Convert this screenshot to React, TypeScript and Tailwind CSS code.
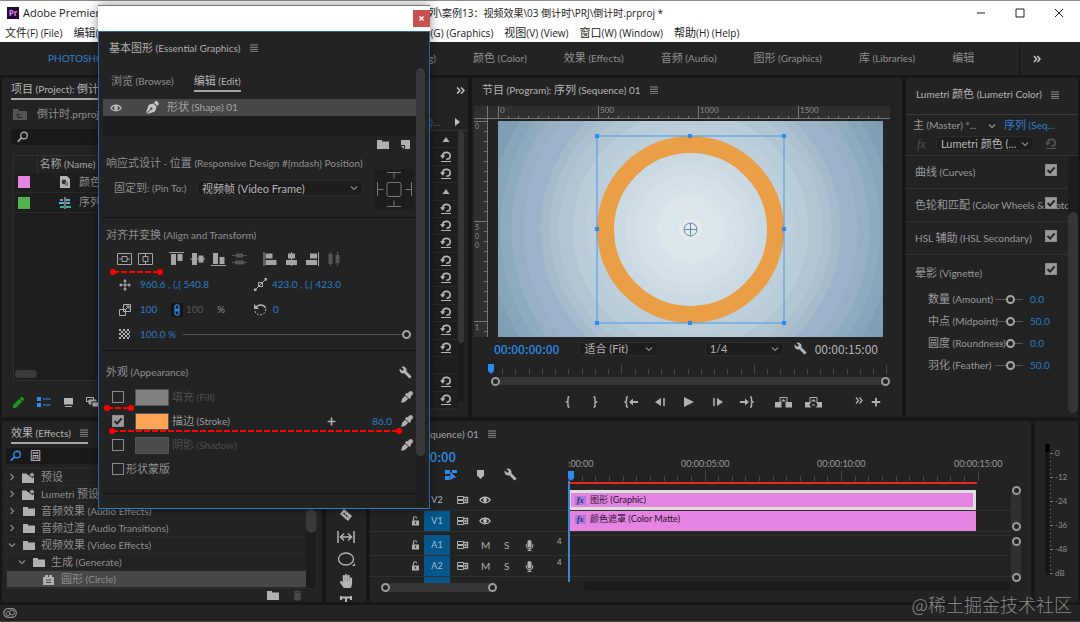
import { useState } from 'react';
import type { ReactNode } from 'react';
import { FaEyeDropper, FaFolder, FaHandPaper, FaMicrophone, FaPen, FaPenNib, FaPlus } from 'react-icons/fa';
import { MdBuild, MdDelete } from 'react-icons/md';

/* Bilingual label: hanzi are set one size above the latin text */
function T({ s, className = '' }: { s: string; className?: string }) {
  return (
    <span className={`whitespace-pre ${className}`}>
      {s.split(/([\u3000-\u9fff]+)/).map((part, i) => (i % 2 ? <span key={i} className="text-[11px]">{part}</span> : part))}
    </span>
  );
}

/* ---------- small icons ---------- */

function Svg({ w, h, className = '', children }: { w: number; h: number; className?: string; children: ReactNode }) {
  return (
    <svg width={w} height={h} viewBox={`0 0 ${w} ${h}`} className={`shrink-0 ${className}`} fill="none" stroke="currentColor">
      {children}
    </svg>
  );
}

const MenuIcon = () => (
  <Svg w={8} h={8} className="text-[#9a9a9a]"><path d="M0 1h8M0 3.3h8M0 5.6h8M0 7.8h8" strokeWidth="0.9" /></Svg>
);

const Chevron = ({ down = true, className = '' }: { down?: boolean; className?: string }) => (
  <Svg w={8} h={8} className={className}><path d={down ? 'M1 2.5 4 5.5 7 2.5' : 'M2.5 1 5.5 4 2.5 7'} strokeWidth="1.1" /></Svg>
);

const SearchIcon = ({ className }: { className: string }) => (
  <Svg w={12} h={12} className={className}><circle cx="7" cy="4.5" r="3.3" strokeWidth="1.4" /><path d="M4.6 6.8.8 10.6" strokeWidth="1.8" /></Svg>
);

const EyeIcon = () => (
  <Svg w={12} h={8} className="text-[#c0c0c0]"><path d="M.8 4C3.4.3 8.6.3 11.2 4 8.6 7.7 3.4 7.7.8 4Z" strokeWidth="1.3" /><circle cx="6" cy="4" r="1.9" fill="currentColor" stroke="none" /></Svg>
);

const ResetIcon = ({ className = 'text-[#b5b5b5]' }: { className?: string }) => (
  <Svg w={12} h={12} className={className}>
    <path d="M2.5 5C2.8.2 10.2.2 10.2 4.7 10.2 7 8.9 8.2 6.4 8.2" strokeWidth="1.7" />
    <path d="M0 4.2h5.4L2.6 7.8Z" fill="currentColor" stroke="none" />
    <path d="M1 10.5h10" />
  </Svg>
);

const PresetFolder = () => (
  <Svg w={13} h={11}>
    <path d="M0 1.5h4.5L5.5 3H7l.6 1.8 2 .2.2 1.5L12 5v6H0Z" fill="currentColor" stroke="none" />
    <path d="m10 0 .8 1.7 1.8.2-1.3 1.3.4 1.8L10 4.1l-1.7.9.4-1.8L7.4 1.9l1.8-.2Z" fill="currentColor" stroke="none" />
  </Svg>
);

const FolderIcon = () => (
  <Svg w={12} h={9}><path d="M0 0h5v1.500h7V9H0Z" fill="currentColor" stroke="none" /></Svg>
);

const SourceIcon = () => (
  <Svg w={12} h={10}>
    <path d="M.5 1.5h6v3h-6ZM.5 5.5h6v3h-6Z" />
    <path d="M6.5 2.5h4v5h-4" strokeWidth="1.4" />
    <path d="M7.500 4h2v2h-2Z" fill="currentColor" stroke="none" />
  </Svg>
);

const LockIcon = () => (
  <Svg w={9} h={10}><path d="M1 4.5h7V9.5H1Z" fill="currentColor" stroke="none" /><path d="M2.4 4.5V2.4a1.6 1.6 0 0 1 3.2 0" strokeWidth="1.1" /><path d="M4.5 5.8v2" stroke="#232323" strokeWidth="1.2" /></Svg>
);

const Playhead = () => (
  <Svg w={6} h={10}><path d="M0 0h6v7L3 10 0 7Z" fill="#2d8ceb" stroke="none" /></Svg>
);

const Knob = () => <span className="h-[9px] w-[9px] shrink-0 rounded-full border-2 border-[#9b9b9b] bg-[#232323]" />;

/* ---------- controls ---------- */

function Check({ label, checked }: { label: string; checked?: boolean }) {
  const [on, setOn] = useState(!!checked);
  return (
    <span className="relative inline-flex h-[12px] w-[12px] shrink-0">
      <input
        type="checkbox"
        aria-label={label}
        checked={on}
        onChange={(e) => setOn(e.target.checked)}
        className="h-full w-full appearance-none border border-[#8a8a8a] checked:bg-[#9a9a9a]"
      />
      {on && (
        <svg viewBox="0 0 12 12" className="pointer-events-none absolute inset-0" fill="none" stroke="#222" strokeWidth="2">
          <path d="m2.5 6 2.6 2.6L9.6 3.4" />
        </svg>
      )}
    </span>
  );
}

function Select({ label, value, className = '' }: { label: string; value: string; className?: string }) {
  return (
    <span className={`relative flex items-center rounded-sm border border-[#2b2b2b] bg-[#1d1d1d] text-[11px] text-[#b5b5b5] ${className}`}>
      <select aria-label={label} className="w-full appearance-none bg-transparent pr-4 pl-1 leading-none outline-none">
        <option>{value}</option>
      </select>
      <Chevron className="pointer-events-none absolute right-1 text-[#8a8a8a]" />
    </span>
  );
}

function Slider({ label, value, className = '' }: { label: string; value: number; className?: string }) {
  return (
    <input
      type="range"
      aria-label={label}
      defaultValue={value}
      className={`h-[10px] appearance-none bg-[linear-gradient(#555,#555)] bg-[length:100%_1px] bg-center bg-no-repeat [&::-webkit-slider-thumb]:h-[9px] [&::-webkit-slider-thumb]:w-[9px] [&::-webkit-slider-thumb]:appearance-none [&::-webkit-slider-thumb]:rounded-full [&::-webkit-slider-thumb]:border-2 [&::-webkit-slider-thumb]:border-[#a5a5a5] [&::-webkit-slider-thumb]:bg-[#232323] ${className}`}
    />
  );
}

const Panel = ({ className = '', children }: { className?: string; children: ReactNode }) => (
  <section className={`flex flex-col overflow-hidden bg-[#232323] ${className}`}>{children}</section>
);

/* ---------- application frame ---------- */

const MENUS = ['文件(F) (File)', '编辑(E) (Edit)', '剪辑(C) (Clip)', '序列(S) (Sequence)', '标记(M) (Markers)', '图形(G) (Graphics)', '视图(V) (View)', '窗口(W) (Window)', '帮助(H) (Help)'];
const WORKSPACES = ['颜色 (Color)', '效果 (Effects)', '音频 (Audio)', '图形 (Graphics)', '库 (Libraries)', '编辑'];

function TitleBar() {
  return (
    <header className="border-t border-[#8a8a8a] bg-white font-['Open_Sans','Noto_Sans_CJK_SC',sans-serif] text-[#222]">
      <div className="flex h-6 items-center pl-[7px]">
        <span className="flex h-[12px] w-[12px] items-center justify-center bg-[#2a0634] text-[8px] font-bold text-[#d58cf0]">Pr</span>
        <span className="ml-1 flex w-[419px] shrink-0 justify-between text-[11px]">
          <span>Adobe Premiere Pro 2020</span>
          <span>E:\PR\系列\</span>
        </span>
        <span className="whitespace-nowrap">案例13：视频效果\03 倒计时\PRJ\倒计时.prproj *</span>
        <div className="ml-auto flex items-center gap-[29px] pr-4">
          <button aria-label="Minimize"><Svg w={10} h={10}><path d="M1 5h8" /></Svg></button>
          <button aria-label="Maximize"><Svg w={10} h={10}><path d="M1 1h8v8H1Z" /></Svg></button>
          <button aria-label="Close"><Svg w={10} h={10}><path d="m1 1 8 8M9 1 1 9" /></Svg></button>
        </div>
      </div>
      <nav className="flex h-[17px] items-center gap-[11px] pl-[5px]">
        {MENUS.map((m) => <button key={m}><T s={m} /></button>)}
      </nav>
    </header>
  );
}

function WorkspaceBar() {
  return (
    <nav className="mb-[3px] flex h-[33px] items-center bg-[#232323] pl-12 text-[#8f8f8f]">
      <div className="flex w-[388px] shrink-0 items-center justify-between">
        <button className="text-[#2d7fd0]">PHOTOSHOP</button>
        <button><T s="学习 (Learning)" /></button>
        <button><T s="编辑 (Editing)" /></button>
      </div>
      <div className="ml-[37px] flex gap-[37px]">
        {WORKSPACES.map((w) => <button key={w}><T s={w} /></button>)}
      </div>
      <div className="ml-auto flex h-full w-[61px] items-center border-l border-[#151515] pl-[13px]">
        <button aria-label="More workspaces" className="text-[#c5c5c5]">
          <Svg w={8} h={8}><path d="m1 1 2.6 3L1 7M4.4 1 7 4 4.4 7" strokeWidth="1.5" /></Svg>
        </button>
      </div>
    </nav>
  );
}

function ProjectPanel() {
  return (
    <Panel className="w-80 shrink-0 pr-2 pl-[9px]">
      <div className="flex h-[22px] items-center border-b-2 border-[#a8a8a8] pt-[2px] text-[#b5b5b5]"><T s="项目 (Project): 倒计时" /></div>
      <div className="flex h-[29px] items-center gap-[10px] pl-[2px] text-[#8f8f8f]">
        <Svg w={14} h={11} className="text-[#555]"><path d="M0 0h5l1 2h8v9H0Z" fill="currentColor" stroke="none" /><path d="M5 5.5v3h4M3.2 6.5 5 4.5l1.8 2" stroke="#222" /></Svg>
        <T s="倒计时.prproj" />
      </div>
      <label className="flex h-4 items-center gap-2 rounded-sm bg-[#191919] pl-[6px]">
        <SearchIcon className="text-[#a5a5a5]" />
        <input aria-label="Search project" className="w-full bg-transparent outline-none" />
      </label>
      <div className="mt-[10px] ml-[2px] flex h-[226px] flex-col border border-[#303030] bg-[#1e1e1e] text-[#8f8f8f]">
        <table className="w-full border-collapse">
          <thead>
            <tr className="h-4 bg-[#232323] text-left text-[#a8a8a8]"><th className="w-[23px] border-r border-[#303030] p-0" /><th className="p-0 pl-[2px] font-normal"><T s="名称 (Name)" /></th></tr>
          </thead>
          <tbody>
            <tr className="h-[20px] border-b border-[#2a2a2a]">
              <td className="p-0 pl-[4px]"><div className="h-3 w-3 bg-[#e583e2]" /></td>
              <td className="p-0"><div className="flex items-center gap-2 pl-[22px]">
                <Svg w={12} h={12} className="text-[#b5b5b5]"><path d="M1 0h7l3 3v9H1Z" fill="currentColor" stroke="none" /><circle cx="5" cy="6" r="2.4" fill="#333" stroke="none" /><path d="M6 6h3v4H6Z" fill="#777" stroke="none" /></Svg>
                <T s="颜色遮罩" />
              </div></td>
            </tr>
            <tr className="h-[20px] border-b border-[#2a2a2a]">
              <td className="p-0 pl-[4px]"><div className="h-3 w-3 bg-[#53b353]" /></td>
              <td className="p-0"><div className="flex items-center gap-2 pl-[22px]">
                <Svg w={12} h={12}><path d="M1 3h3M7 3h4M0 6h5M7 6h4" stroke="#6da4cf" strokeWidth="2" /><path d="M1 10h4M7 10h5" stroke="#29b58f" strokeWidth="2" /><path d="M6 0v12" stroke="#ccc" /></Svg>
                <T s="序列 (Sequence) 01" />
              </div></td>
            </tr>
          </tbody>
        </table>
        <div className="mt-auto mb-[2px] ml-[1px] h-2 w-[22px] rounded-full bg-[#3a3a3a]" />
      </div>
      <div className="flex flex-1 items-center gap-[13px] pt-[6px] pl-[2px] text-[#b5b5b5]">
        <FaPen size={11} className="text-[#1f9a1f]" />
        <Svg w={14} h={10} className="text-[#2d8ceb]"><path d="M0 0h4v4H0ZM0 6h4v4H0Z" fill="currentColor" stroke="none" /><path d="M6 2h8M6 8h8" /></Svg>
        <Svg w={9} h={9}><path d="M0 0h9v6.5H0ZM1 8h7v1H1Z" fill="currentColor" stroke="none" /></Svg>
        <Svg w={13} h={10}><path d="M.5.5h7v4h-7Z" /><path d="M3 3h7v4H3Z" fill="#999" /><path d="M6 5h7v5H6Z" fill="currentColor" stroke="#232323" /></Svg>
      </div>
    </Panel>
  );
}

/* 't' is a section toggle, 'r' a parameter reset, '-' an empty line */
const CONTROL_ROWS = 'trrtrrrrrrrrr-rr'.split('');

function EffectControls() {
  return (
    <Panel className="w-[142px] shrink-0">
      <div className="flex h-9 items-center justify-end pr-[3px] pb-3 text-[#c5c5c5]">
        <Svg w={9} h={7}><path d="m1 .5 3 3-3 3M5 .5l3 3-3 3" strokeWidth="1.4" /></Svg>
      </div>
      <div className="flex h-[17px] items-center justify-end gap-[15px] border-b border-[#333] pr-[8px]">
        <T s="序列 01 (Graphic)..." className="text-[#2b6fb0]" />
        <Svg w={5} h={8} className="text-[#c5c5c5]"><path d="M0 0v8l5-4Z" fill="currentColor" stroke="none" /></Svg>
      </div>
      <div className="flex min-h-0 flex-1">
        <div className="mb-2 flex flex-1 flex-col bg-[#1e1e1e]">
          {CONTROL_ROWS.map((kind, i) => (
            <div key={i} className="flex min-h-0 flex-1 items-center justify-end border-b border-[#292929] pr-[6px]">
              {kind === 'r' && <ResetIcon />}
              {kind === 't' && <Svg w={12} h={5} className="text-[#b0b0b0]"><path d="M6 0 9.5 5h-7Z" fill="currentColor" stroke="none" /></Svg>}
            </div>
          ))}
        </div>
        <div className="mr-1 mb-4 w-[6px] bg-[#1b1b1b]"><div className="h-[212px] rounded-full bg-[#353535]" /></div>
      </div>
    </Panel>
  );
}

/* ---------- program monitor ---------- */

const RINGS: [number, string][] = [
  [215, '#809fb5'], [202, '#88a6b9'], [190, '#8fabbe'], [179, '#97b0c4'], [167, '#9cb4c9'], [150, '#a5bbcb'], [141, '#abc1d1'],
  [132, '#b0c6d3'], [118, '#b8ccd9'], [104, '#bccfdb'], [88, '#c4d4df'], [78, '#cbd9e2'], [65, '#cfdce5'], [55, '#d3e0e7'], [45, '#d6e2e9'], [34, '#dbe6eb'], [11, '#e8e9eb'],
];

function Stage() {
  const handles = [[99, 15], [192, 15], [286, 15], [99, 108], [286, 108], [99, 202], [192, 202], [286, 202]];
  return (
    <svg viewBox="0 0 385 216" className="block h-auto w-full">
      <rect width="385" height="216" fill="#7b9db2" />
      {RINGS.map(([r, c]) => <circle key={r} cx="192.5" cy="108.5" r={r} fill={c} />)}
      <circle cx="192.5" cy="108.5" r="85" fill="none" stroke="#ea9e46" strokeWidth="17" />
      <rect x="99" y="15" width="187" height="187" fill="none" stroke="#4a96e6" />
      {handles.map(([x, y]) => <rect key={`${x}-${y}`} x={x - 2} y={y - 2} width="4" height="4" fill="#2d8ceb" />)}
      <g fill="none" stroke="#5f8fb4"><circle cx="192.5" cy="108.5" r="6.5" /><path d="M186 108.5h13M192.5 102v13" /></g>
    </svg>
  );
}

function ProgramMonitor() {
  const steps = Array.from({ length: 39 }, (_, i) => i);
  return (
    <Panel className="flex-1 pl-[2px]">
      <div className="mb-1 flex h-6 items-center gap-[9px] pl-2 text-[#b5b5b5]"><T s="节目 (Program): 序列 (Sequence) 01" /><MenuIcon /></div>
      <svg className="block h-[13px] w-[416px] bg-[#2f2f2f]" stroke="#777" fill="none">
        <path d="M0 12.5h416M13.5 0v13" />
        {steps.map((i) => <path key={i} d={`M${24.5 + i * 10} ${i % 10 === 0 ? 0 : 10}v13`} />)}
        {['0', '500', '1000', '1500'].map((n, i) => <text key={n} x={26 + i * 100} y="7" fill="#8d8d8d" stroke="none" fontSize="8">{n}</text>)}
      </svg>
      <div className="flex">
        <svg className="block h-[218px] w-[14px] bg-[#2f2f2f]" stroke="#777" fill="none">
          <path d="M13.5 0v218M0 2.5h13M0 102.5h13M0 202.5h13" />
          {steps.slice(0, 22).map((i) => <path key={i} d={`M10 ${2.5 + i * 10}h4`} />)}
          <g fill="#8d8d8d" stroke="none" fontSize="7">
            <text x="1" y="10">0</text><text x="1" y="111">5</text><text x="1" y="120">0</text><text x="1" y="129">0</text><text x="1" y="211">1</text>
          </g>
        </svg>
        <div className="mr-[19px] ml-[10px] flex-1 pt-[2px]"><Stage /></div>
      </div>
      <div className="flex h-[23px] items-center justify-between pr-6 pl-5">
        <div className="flex items-center gap-5">
          <span className="font-['Noto_Sans_CJK_SC',sans-serif] text-xs font-medium text-[#2d8ceb]">00:00:00:00</span>
          <Select label="Zoom level" value="适合 (Fit)" className="h-[14px] w-[79px]" />
        </div>
        <div className="flex items-center text-[#b5b5b5]">
          <Select label="Playback resolution" value="1/4" className="h-[14px] w-[79px]" />
          <button aria-label="Settings" className="mr-2 ml-[10px]"><MdBuild size={13} /></button>
          <span className="font-['Noto_Sans_CJK_SC',sans-serif] text-xs">00:00:15:00</span>
        </div>
      </div>
      <div className="flex h-[14px] items-end pl-[14px]">
        <Playhead />
        <svg className="block h-[10px] flex-1" stroke="#484848" fill="none">
          {steps.slice(0, 30).map((i) => <path key={i} d={`M${8.5 + Math.round(i * 13.25)} ${i % 10 === 9 ? 1 : 5}v10`} />)}
        </svg>
      </div>
      <div className="mr-3 ml-[17px] flex h-[14px] items-center">
        <div className="flex h-2 flex-1 items-center justify-between rounded-full bg-[#353535]"><Knob /><Knob /></div>
      </div>
      <div className="grid flex-1 grid-cols-[1fr_auto_1fr] items-center pb-[2px] pl-[6px] text-[#b0b0b0]">
        <span />
        <div className="flex gap-5">
          <div className="flex gap-[11px]">
            <button aria-label="Mark in"><Svg w={16} h={12}><path d="M9.5 1h-1L8 2v3L6.5 6 8 7v3l.5 1h1" strokeWidth="1.5" /></Svg></button>
            <button aria-label="Mark out"><Svg w={16} h={12}><path d="M6.5 1h1L8 2v3l1.5 1L8 7v3l-.5 1h-1" strokeWidth="1.5" /></Svg></button>
          </div>
          <div className="flex gap-[13px]">
            <button aria-label="Go to in"><Svg w={16} h={12}><path d="M5 1H4l-.5 1v3L2 6l1.5 1v3l.5 1h1" strokeWidth="1.5" /><path d="M9 6h6" strokeWidth="2" /><path d="m6 6 4-3.5v7Z" fill="currentColor" stroke="none" /></Svg></button>
            <button aria-label="Step back"><Svg w={16} h={12}><path d="M9 2v8L3 6Z" fill="currentColor" stroke="none" /><path d="M12 2v8" strokeWidth="1.6" /></Svg></button>
            <button aria-label="Play"><Svg w={16} h={12}><path d="M3 1v10l10-5Z" fill="currentColor" stroke="none" /></Svg></button>
            <button aria-label="Step forward"><Svg w={16} h={12}><path d="M7 2v8l6-4Z" fill="currentColor" stroke="none" /><path d="M4 2v8" strokeWidth="1.6" /></Svg></button>
            <button aria-label="Go to out"><Svg w={16} h={12}><path d="M11 1h1l.5 1v3L14 6l-1.5 1v3l-.5 1h-1" strokeWidth="1.5" /><path d="M1 6h6" strokeWidth="2" /><path d="M10 6 6 2.5v7Z" fill="currentColor" stroke="none" /></Svg></button>
          </div>
          <div className="flex gap-[13px]">
            <button aria-label="Lift"><Svg w={17} h={12}><path d="M0 6h6.500v5.500H0ZM10.500 6H17v5.500h-6.500Z" fill="currentColor" stroke="none" /><path d="M5 6V1.500h7V6" /><path d="M8.500 3 11 5.500H6Z" fill="currentColor" stroke="none" /></Svg></button>
            <button aria-label="Extract"><Svg w={17} h={12}><path d="M0 6h6L4.500 8.800 6 11.500H0ZM17 6h-6l1.500 2.800-1.500 2.700h6Z" fill="currentColor" stroke="none" /><path d="M5 6V1.500h7V6M7 9h3" /><path d="M8.500 3 11 5.500H6Z" fill="currentColor" stroke="none" /></Svg></button>
          </div>
        </div>
        <div className="flex justify-end gap-2 pr-[21px]">
          <button aria-label="More buttons" className="self-start"><Svg w={8} h={7}><path d="m1 .5 2.5 3L1 6.5M4.5.5 7 3.5l-2.5 3" strokeWidth="1.3" /></Svg></button>
          <button aria-label="Button editor"><FaPlus size={10} /></button>
        </div>
      </div>
    </Panel>
  );
}

/* ---------- lumetri ---------- */

const LUMETRI = ['曲线 (Curves)', '色轮和匹配 (Color Wheels & Match)', 'HSL 辅助 (HSL Secondary)', '晕影 (Vignette)'];
const VIGNETTE: [string, string][] = [['数量 (Amount)', '0.0'], ['中点 (Midpoint)', '50.0'], ['圆度 (Roundness)', '0.0'], ['羽化 (Feather)', '50.0']];

function LumetriPanel() {
  return (
    <Panel className="w-[172px] shrink-0 text-[#9a9a9a]">
      <div className="flex h-[37px] items-center gap-[9px] border-b border-[#3a3a3a] pb-[3px] pl-[10px] text-[#b5b5b5]">
        <T s="Lumetri 颜色 (Lumetri Color)" /><MenuIcon />
      </div>
      <div className="flex h-[21px] items-center pl-[7px]">
        <T s="主 (Master) *..." className="w-[75px]" /><Chevron /><a href="#seq" className="ml-2 text-[#2d7fd0]"><T s="序列 (Seq..." /></a>
      </div>
      <div className="flex h-5 items-center border-b border-[#333] pb-1 pl-[11px]">
        <span className="w-[19px] font-['Liberation_Serif',serif] text-xs text-[#555] italic">fx</span>
        <Select label="Effect" value="Lumetri 颜色 (..." className="h-[15px] w-[98px]" />
        <ResetIcon className="ml-[11px] text-[#555]" />
      </div>
      <div className="flex min-h-0 flex-1">
        <div className="min-w-0 flex-1">
          {LUMETRI.map((name, i) => (
            <div key={name} className={`relative flex h-[33px] items-center overflow-hidden pl-[9px] ${i < 3 ? 'border-b border-[#303030]' : 'pt-1'}`}>
              <T s={name} />
              <span className="absolute top-[8px] right-[11px] flex bg-[#232323]"><Check label={name} checked /></span>
            </div>
          ))}
          {VIGNETTE.map(([name, value]) => (
            <label key={name} className="flex h-[22px] items-center pl-[22px]">
              <span className="w-0 flex-1"><T s={name} /></span>
              <Slider label={name} value={60} className="w-[28px]" />
              <span className="ml-[7px] w-[38px] text-[#2b7bc4]">{value}</span>
            </label>
          ))}
        </div>
        <div className="mb-1 w-[10px] bg-[#1d1d1d] pt-14"><div className="h-full rounded-full bg-[#353535]" /></div>
      </div>
    </Panel>
  );
}

/* ---------- lower row ---------- */

const TREE: { name: string; icon: 'preset' | 'folder' | 'effect'; open?: boolean; depth: number }[] = [
  { name: '预设', icon: 'preset', depth: 0 },
  { name: 'Lumetri 预设', icon: 'preset', depth: 0 },
  { name: '音频效果 (Audio Effects)', icon: 'folder', depth: 0 },
  { name: '音频过渡 (Audio Transitions)', icon: 'folder', depth: 0 },
  { name: '视频效果 (Video Effects)', icon: 'folder', open: true, depth: 0 },
  { name: '生成 (Generate)', icon: 'folder', open: true, depth: 1 },
  { name: '圆形 (Circle)', icon: 'effect', depth: 2 },
];
const INDENT = ['pl-[1px]', 'pl-[11px]', 'pl-[35px]'];

function EffectsPanel() {
  return (
    <Panel className="w-80 shrink-0 pl-1">
      <div className="ml-[5px] flex h-[23px] w-[77px] shrink-0 items-center gap-[9px] self-start border-b-2 border-[#a8a8a8] pt-[3px] text-[#b5b5b5]">
        <T s="效果 (Effects)" /><MenuIcon />
      </div>
      <label className="mt-1 mr-4 flex h-4 shrink-0 items-center gap-2 bg-[#191919] pl-1">
        <SearchIcon className="text-[#2d8ceb]" />
        <input aria-label="Search effects" defaultValue="圆" className="w-full bg-transparent text-[11px] text-[#c5c5c5] outline-none" />
      </label>
      <div className="mt-1 mr-[5px] flex border border-[#2c2c2c] text-[#8f8f8f]">
        <ul className="flex-1">
          {TREE.map((n) => (
            <li key={n.name} className={`flex h-[17px] items-center gap-[6px] border-b border-[#292929] ${INDENT[n.depth]} ${n.depth === 2 ? 'bg-[#474747]' : ''}`}>
              {n.depth < 2 && <Chevron down={n.open ?? false} />}
              <span className="flex w-[13px] shrink-0 justify-center text-[#b0b0b0]">
                {n.icon === 'preset' && <PresetFolder />}
                {n.icon === 'folder' && <FolderIcon />}
                {n.icon === 'effect' && <Svg w={11} h={11}><path d="M0 3h2V1h3v2h1V1h3v2h2v8H0Z" fill="currentColor" stroke="none" /><path d="M3 6h5M3 8.5h5" stroke="#444" /></Svg>}
              </span>
              <T s={n.name} />
            </li>
          ))}
        </ul>
        <div className="w-[10px] bg-[#1d1d1d] pt-10"><div className="h-6 rounded-full bg-[#3a3a3a]" /></div>
      </div>
      <div className="flex min-h-0 flex-1 items-center justify-end gap-3 pr-[18px] text-[#b0b0b0]">
        <button aria-label="New bin"><FolderIcon /></button>
        <button aria-label="Delete" className="text-[#484848]"><MdDelete size={13} /></button>
      </div>
    </Panel>
  );
}

function ToolsPanel() {
  return (
    <Panel className="w-10 shrink-0 items-center gap-2 pt-[87px] text-[#b5b5b5] *:shrink-0">
      <button aria-label="Razor"><Svg w={14} h={14}><path d="m5 1 8 7-4 5-8-7Z" fill="currentColor" stroke="none" /><path d="m4.5 5 5 4.5" stroke="#232323" strokeWidth="1.5" strokeDasharray="2 1" /></Svg></button>
      <button aria-label="Slip"><Svg w={18} h={14}><path d="M1 1v12M17 1v12M4 7h10" strokeWidth="1.5" /><path d="M7 3.5 3.500 7 7 10.500M11 3.500 14.500 7 11 10.500" strokeWidth="1.500" /></Svg></button>
      <button aria-label="Ellipse"><Svg w={18} h={14}><ellipse cx="9" cy="7" rx="7.5" ry="6" strokeWidth="1.3" /><path d="M18 11v3h-3Z" fill="currentColor" stroke="none" /></Svg></button>
      <button aria-label="Hand"><FaHandPaper size={14} /></button>
      <button aria-label="Type"><Svg w={12} h={12}><path d="M0 1.5h12M1 0v4M11 0v4M6 1v11" strokeWidth="2" /></Svg></button>
    </Panel>
  );
}

function TrackHead({ name, audio, locked = true }: { name: string; audio?: boolean; locked?: boolean }) {
  return (
    <div className="flex h-[21px] items-center border-b border-[#303030] pl-[41px] text-[#b0b0b0]">
      <span className="w-[13px] shrink-0">{locked && <LockIcon />}</span>
      <span className={`flex h-full w-[26px] shrink-0 items-center justify-center text-[9px] text-[#9fbfd8] ${locked ? 'bg-[#07568c]' : ''}`}>{name}</span>
      <span className="ml-[7px] flex w-[22px]"><SourceIcon /></span>
      {audio ? (
        <>
          <button className="w-[23px] pl-[2px] text-left">M</button>
          <button className="w-[22px] pl-[2px] text-left">S</button>
          <FaMicrophone size={11} />
          <span className="ml-[22px] self-start text-[8px]">4</span>
        </>
      ) : <EyeIcon />}
    </div>
  );
}

const Fx = () => <i className="mx-1 w-[11px] bg-[#a77fd6] px-[2px] font-['Liberation_Serif',serif] text-[8px] leading-[9px] font-bold text-[#33208a]">fx</i>;

function Timeline() {
  const ticks = Array.from({ length: 31 }, (_, i) => i);
  return (
    <Panel className="flex-1">
      <div className="flex h-[26px] shrink-0 items-center gap-[9px] pl-[22px] text-[#a5a5a5]"><T s="序列 (Sequence) 01" /><MenuIcon /></div>
      <div className="flex min-h-0 flex-1">
        <div className="flex w-[198px] shrink-0 flex-col">
          <div className="flex h-[42px] flex-col pl-[15px]">
            <span className="font-['Noto_Sans_CJK_SC',sans-serif] text-[13px] leading-5 font-medium text-[#2d8ceb]">00:00:00:00</span>
            <div className="flex items-center gap-[20px] pt-[1px] pl-[60px] text-[#b5b5b5]">
              <Svg w={12} h={12} className="text-[#2d8ceb]"><path d="M0 1h5v4H0ZM0 7h5v4H0ZM7 1h5v3H7Z" fill="currentColor" stroke="none" /><path d="m5 2 7 7H8.5L5 12Z" fill="currentColor" stroke="#232323" strokeWidth="0.6" /></Svg>
              <Svg w={7} h={9}><path d="M0 0h7v5.5L3.5 9 0 5.5Z" fill="currentColor" stroke="none" /></Svg>
              <MdBuild size={13} />
            </div>
          </div>
          <div className="mt-[1px]"><TrackHead name="V2" locked={false} /><TrackHead name="V1" /></div>
          <div className="mt-[3px]"><TrackHead name="A1" audio /><TrackHead name="A2" audio /></div>
          <div className="h-[6px] pl-[54px]"><div className="h-full w-[26px] bg-[#07568c]" /></div>
          <div className="ml-[11px] flex h-[9px] w-[116px] items-center justify-between rounded-full bg-[#353535]"><Knob /><Knob /></div>
        </div>
        <div className="relative flex min-w-0 flex-1 flex-col overflow-hidden">
          <svg className="block h-[42px] w-full" fill="none" stroke="#4a4a4a">
            {ticks.map((i) => <path key={i} d={`M${Math.round(i * 13.65)}.5 ${i % 10 === 0 ? 24 : 29}V34`} />)}
            <g fill="#9a9a9a" stroke="none" fontSize="9"><text x="-23" y="20">00:00:00:00</text><text x="113" y="20">00:00:05:00</text><text x="249" y="20">00:00:10:00</text><text x="386" y="20">00:00:15:00</text></g>
            <path d="M0 36h409" stroke="#e8261a" strokeWidth="2" />
          </svg>
          <div className="mt-[1px] h-[21px] border-b border-[#303030]">
            <div className="flex h-5 w-[92%] items-center border-[3px] border-[#dedede] bg-[#e583e2] text-[9px] text-[#2a1430]"><Fx /> 图形 (Graphic)</div>
          </div>
          <div className="h-[21px] border-b border-[#303030]">
            <div className="flex h-5 w-[92%] items-center bg-[#e583e2] pb-1 pl-[3px] text-[9px] text-[#2a1430]"><Fx /> 颜色遮罩 (Color Matte)</div>
          </div>
          <div className="mt-[3px] h-[21px] border-y border-[#303030]" />
          <div className="h-[21px] border-b border-[#303030]" />
          <div className="mt-[5px] ml-4 h-[9px] rounded-full bg-[#1c1c1c]" />
          <div className="absolute top-[24px] left-0"><Playhead /></div>
          <div className="absolute top-[34px] left-0 h-[101px] w-[2px] bg-[#3a86d0]" />
        </div>
        <div className="mr-[10px] flex w-[10px] flex-col gap-[6px] pt-[39px]">
          <div className="flex h-[45px] flex-col items-center justify-between rounded-full bg-[#303030]"><Knob /><Knob /></div>
          <div className="flex h-[45px] flex-col items-center justify-between rounded-full bg-[#303030]"><Knob /><Knob /></div>
        </div>
      </div>
    </Panel>
  );
}

function Meters() {
  return (
    <Panel className="w-[43px] shrink-0 pt-[23px]">
      <svg className="block h-[136px] w-full" fill="none">
        <path d="M10.5 0h4v131h-4Z" fill="#151515" />
        <path d="M10.5 0h4v8h-4Z" fill="#000" />
        {Array.from({ length: 31 }, (_, i) => <path key={i} d={`M15 ${9.5 + i * 4}h${i % 6 === 0 ? 3 : 1}`} stroke="#777" />)}
        <g fill="#8d8d8d" fontSize="8">
          {['0', '-12', '-24', '-36', '-48', 'dB'].map((t, i) => <text key={t} x="20" y={12 + i * 24}>{t}</text>)}
        </g>
      </svg>
    </Panel>
  );
}

/* ---------- essential graphics window ---------- */

const Divider = () => <div className="ml-1 h-[1px] shrink-0 bg-[#141414]" />;

function AlignIcons() {
  const solid = { fill: 'currentColor', stroke: 'none' };
  return (
    <div className="mb-[6px] flex h-[14px] items-center gap-4 pl-[18px] text-[#a5a5a5]">
      <div className="flex gap-[6px]">
        <button aria-label="Center vertically"><Svg w={15} h={12}><path d="M.5.5h14v11H.5ZM5 3.500h5v5H5ZM2 6h3M10 6h3" /></Svg></button>
        <button aria-label="Center horizontally"><Svg w={15} h={12}><path d="M.5.5h14v11H.5ZM5 3.500h5v5H5ZM7.500 0v3.500M7.500 8.500V12" /></Svg></button>
      </div>
      <div className="flex gap-[6px]">
        <button aria-label="Align top"><Svg w={15} h={14}><path d="M0 .5h15" /><path d="M2 2h5v11H2ZM8.5 2h5v7h-5Z" {...solid} /></Svg></button>
        <button aria-label="Align middle"><Svg w={15} h={14}><path d="M0 7h15" /><path d="M2 1h5v12H2ZM8.5 3.500h5v7h-5Z" {...solid} /></Svg></button>
        <button aria-label="Align bottom"><Svg w={15} h={14}><path d="M0 13.500h15" /><path d="M2 1h5v11H2ZM8.5 5h5v7h-5Z" {...solid} /></Svg></button>
        <button aria-label="Distribute vertically" className="text-[#555]"><Svg w={15} h={14}><path d="M0 3.500h15M0 10.500h15" /><path d="M4 1.500h7v4H4ZM3 8.500h9v4H3Z" {...solid} /></Svg></button>
      </div>
      <div className="flex gap-[6px]">
        <button aria-label="Align left"><Svg w={15} h={14}><path d="M1 0v14" /><path d="M2.500 1.500h7v5h-7ZM2.500 8h11v5h-11Z" {...solid} /></Svg></button>
        <button aria-label="Align center"><Svg w={15} h={14}><path d="M7.500 0v14" /><path d="M4 1.500h7v5H4ZM2 8h11v5H2Z" {...solid} /></Svg></button>
        <button aria-label="Align right"><Svg w={15} h={14}><path d="M13.500 0v14" /><path d="M5 1.500h7v5H5ZM1 8h11v5H1Z" {...solid} /></Svg></button>
        <button aria-label="Distribute horizontally" className="text-[#555]"><Svg w={15} h={14}><path d="M4.500 0v14M11.500 0v14" /><path d="M2.500 2h4v10h-4ZM9.500 3h4v8h-4Z" {...solid} /></Svg></button>
      </div>
    </div>
  );
}

function AppearanceRow({ name, swatch, checked, value }: { name: string; swatch: string; checked?: boolean; value?: string }) {
  return (
    <div className={`flex h-6 items-center pr-[3px] pl-[13px] ${checked ? 'text-[#9a9a9a]' : 'text-[#4d4d4d]'}`}>
      <Check label={name} checked={checked} />
      <button aria-label={`${name} color`} className={`mr-[3px] ml-[11px] h-[17px] w-[34px] border border-[#555] ${swatch}`} />
      <T s={name} />
      <span className="ml-auto flex items-center text-[#b0b0b0]">
        {value && <><FaPlus size={9} className="mr-9" /><span className="mr-[9px] text-[#2b7bc4]">{value}</span></>}
        <FaEyeDropper size={12} />
      </span>
    </div>
  );
}

function EssentialGraphics() {
  return (
    <section className="absolute top-[5px] left-[98px] flex w-[332px] flex-col border-t border-[#777] shadow-[0_0_10px_rgba(0,0,0,0.45)]">
      <div className="flex h-[25px] items-center justify-end bg-white">
        <button aria-label="Close window" className="flex h-[17px] w-[17px] items-center justify-center bg-[#c75050] text-white">
          <Svg w={5} h={5}><path d="m.5.5 4 4M4.500.5l-4 4" strokeWidth="1.4" /></Svg>
        </button>
      </div>
      <div className="relative flex flex-col border border-[#2868a8] border-b-[#2d7fd0] bg-[#232323] pr-[13px] text-[#8f8f8f]">
        <div className="flex h-8 items-center gap-[9px] pl-[10px] text-[#b0b0b0]"><T s="基本图形 (Essential Graphics)" /><MenuIcon /></div>
        <div className="flex h-[35px] items-center gap-5 pl-[12px]">
          <button><T s="浏览 (Browse)" /></button>
          <button className="border-b-2 border-[#a5a5a5] pt-[2px] pb-[1px] text-[#b5b5b5]"><T s="编辑 (Edit)" /></button>
        </div>
        <div className="ml-1 flex h-[17px] items-center bg-[#474747] pl-[7px] text-[#a5a5a5]">
          <EyeIcon /><FaPenNib size={13} className="mr-[8px] ml-6 text-[#c5c5c5]" /><T s="形状 (Shape) 01" />
        </div>
        <div className="ml-1 h-5 bg-[#1d1d1d]" />
        <div className="flex h-4 items-center justify-end gap-3 pr-[6px] text-[#b0b0b0]">
          <FolderIcon />
          <Svg w={9} h={9}><path d="M0 0h9v9H4V5H0Z" fill="currentColor" stroke="none" /><path d="M0 6h3v3Z" fill="currentColor" stroke="none" /></Svg>
        </div>
        <div className="flex h-[65px] pr-[2px]">
          <div className="min-w-0 flex-1">
            <div className="flex h-[23px] items-center pl-[7px]"><T s="响应式设计 - 位置 (Responsive Design #{mdash} Position)" /></div>
            <div className="flex h-[26px] items-center gap-[4px] pl-[15px]">
              <T s="固定到: (Pin To:)" className="w-[79px]" />
              <Select label="Pin to" value="视频帧 (Video Frame)" className="h-4 w-[166px]" />
            </div>
          </div>
          <Svg w={40} h={40} className="mt-[17px] bg-[#1d1d1d] text-[#777]"><rect x="13" y="13.5" width="14" height="14" rx="2" /><path d="M13 3.5h14M20 3.500v6M13 37.500h14M20 31.500v6M3.500 13v14M3.500 20.500h6M37.500 13v14M31 20.500h6" /></Svg>
        </div>
        <Divider />
        <div className="flex h-[34px] items-center pl-[7px]"><T s="对齐并变换 (Align and Transform)" /></div>
        <AlignIcons />
        <div className="flex h-[25px] items-center pl-5 text-[#2b7bc4]">
          <Svg w={12} h={12} className="mr-[9px] text-[#b0b0b0]"><path d="M6 1v10M1 6h10" /><path d="m6 0 2 2.5H4ZM6 12l2-2.5H4ZM0 6l2.5-2v4ZM12 6 9.500 4v4Z" fill="currentColor" stroke="none" /></Svg>
          <T s="960.6 , (,{ 540.8" className="w-[114px]" />
          <Svg w={13} h={13} className="mr-[5px] text-[#b0b0b0]"><path d="M1 12 12 1M4.500 4.500h4v4h-4Z" /><path d="M0 10.500h2.500V13H0ZM10.500 0H13v2.500h-2.500Z" fill="currentColor" stroke="none" /></Svg>
          <T s="423.0 , (,{ 423.0" />
        </div>
        <div className="flex h-[25px] items-center pl-5">
          <Svg w={12} h={12} className="mr-[9px] text-[#b0b0b0]"><path d="M.5 5.500h6v6h-6ZM4.500.5h7v7h-7Z" /><path d="m6 6 4-4M7 2h3v3" /></Svg>
          <span className="w-[31px] text-[#2b7bc4]">100</span>
          <button aria-label="Link scale" className="mr-[3px] flex h-[14px] w-3 items-center justify-center bg-[#151515] text-[#2d8ceb]">
            <Svg w={6} h={12}><rect x="1" y=".8" width="4" height="6" rx="2" strokeWidth="1.3" /><rect x="1" y="5.2" width="4" height="6" rx="2" strokeWidth="1.3" /></Svg>
          </button>
          <span className="w-[31px] text-[#555]">100</span>
          <span className="w-[37px]">%</span>
          <Svg w={13} h={13} className="text-[#b0b0b0]"><path d="M2 4.500C4 1 10 1 11.500 5" strokeWidth="1.5" /><path d="M11.800 6c0 7-9.500 8-11 2" strokeDasharray="2 1.5" /><path d="M0 1v5h5Z" fill="currentColor" stroke="none" /></Svg>
          <span className="ml-[6px] text-[#2b7bc4]">0</span>
        </div>
        <div className="mb-[3px] flex h-[25px] items-center pr-[5px] pl-5">
          <Svg w={11} h={11} className="mr-[10px] text-[#b5b5b5]"><path d="M0 1h11M2 3h11M0 5h11M2 7h11M0 9h11" strokeWidth="2" strokeDasharray="2 2" /></Svg>
          <span className="w-[43px] text-[#2b7bc4]">100.0 %</span>
          <Slider label="Opacity" value={100} className="flex-1" />
        </div>
        <Divider />
        <div className="flex h-[34px] items-center justify-between pt-2 pr-[4px] pl-[7px]">
          <T s="外观 (Appearance)" /><MdBuild size={13} className="text-[#b5b5b5]" />
        </div>
        <AppearanceRow name="填充 (Fill)" swatch="bg-[#808080]" />
        <AppearanceRow name="描边 (Stroke)" swatch="bg-[#ffa556]" checked value="86.0" />
        <AppearanceRow name="阴影 (Shadow)" swatch="bg-[#4b4b4b]" />
        <label className="mb-[12px] flex h-6 items-center gap-[2px] pl-[13px]"><Check label="形状蒙版" /><T s="形状蒙版" /></label>
        <Divider />
        <div className="h-[14px]" />
        <div className="absolute top-9 right-[4px] bottom-0 w-[9px] bg-[#1e1e1e]"><div className="h-[388px] rounded-full bg-[#383838]" /></div>
        {/* review marks */}
        <svg className="pointer-events-none absolute inset-0 h-full w-full" stroke="#f00" fill="#f00" strokeWidth="2">
          {[[14, 61, 240], [8, 32, 376], [13, 300, 399]].map(([x1, x2, y]) => (
            <g key={y}><path d={`M${x1} ${y}H${x2}`} strokeDasharray="6 2" /><circle cx={x1} cy={y} r="2" /><circle cx={x2} cy={y} r="2" /></g>
          ))}
        </svg>
      </div>
    </section>
  );
}

export default function App() {
  return (
    <div className="relative flex min-h-screen flex-col overflow-hidden bg-[#171717] font-['Lato','Noto_Sans_CJK_SC',sans-serif] text-[10px]">
      <TitleBar />
      <WorkspaceBar />
      <main className="flex flex-1 flex-col gap-1 px-[2px]">
        <div className="flex h-[339px] gap-1">
          <ProjectPanel />
          <EffectControls />
          <ProgramMonitor />
          <LumetriPanel />
        </div>
        <div className="flex h-[181px] gap-1">
          <EffectsPanel />
          <ToolsPanel />
          <Timeline />
          <Meters />
        </div>
      </main>
      <footer className="relative mt-[3px] flex h-[17px] items-center border-b border-[#444] bg-[#232323] pl-[3px] text-[#8f8f8f]">
        <Svg w={14} h={10}><rect x=".7" y=".7" width="12.6" height="8.6" rx="4.3" strokeWidth="1.2" /><circle cx="5" cy="5.5" r="2" /><circle cx="9" cy="4.5" r="2.5" /></Svg>
        <span className="absolute right-2 bottom-[5px] font-['Noto_Sans_CJK_SC',sans-serif] text-[18px] leading-6 font-light text-[#8a8a8a]">@稀土掘金技术社区</span>
      </footer>
      <EssentialGraphics />
    </div>
  );
}
